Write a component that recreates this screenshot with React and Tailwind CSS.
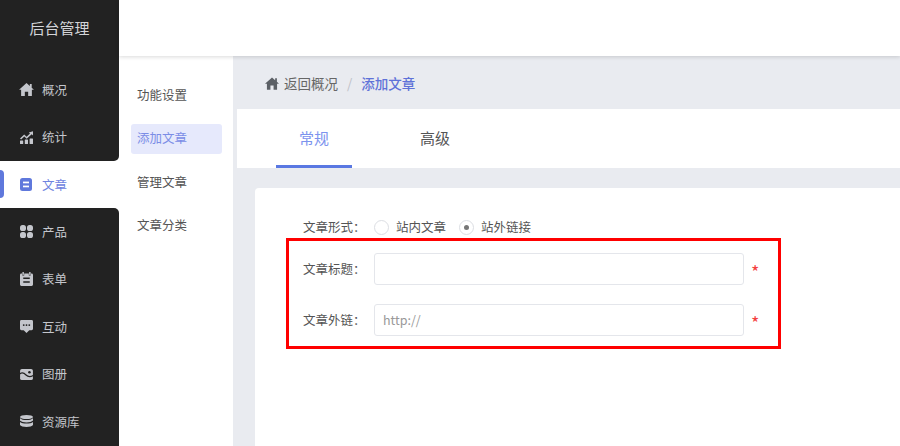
function HouseIcon({ className }) {
  return (
    <svg viewBox="0 0 16 14" className={className} fill="currentColor">
      <path d="M8 0 0 7.2h2.2V14h4V9.4h3.6V14h4V7.2H16L13.6 5V1h-2v2.2z" />
    </svg>
  )
}

function ChartIcon({ className }) {
  return (
    <svg viewBox="0 0 13 13" className={className} fill="currentColor">
      <rect x="0" y="9.6" width="3.2" height="3.4" rx="0.5" />
      <rect x="4.8" y="8.6" width="3.2" height="4.4" rx="0.5" />
      <rect x="9.6" y="7.6" width="3.4" height="5.4" rx="0.5" />
      <path d="M0 7.6 4.2 3.6l2.4 2.2L10 2.6 8.8 1.4 13 0.2v4.2l-1.3-1.2-5 4.6-2.4-2.2-3.2 3z" />
    </svg>
  )
}

function ArticleIcon({ className }) {
  return (
    <svg viewBox="0 0 12 13" className={className}>
      <rect width="12" height="13" rx="2.5" fill="currentColor" />
      <rect x="3" y="3.6" width="6" height="1.7" fill="#fff" />
      <rect x="3" y="7.6" width="6" height="1.7" fill="#fff" />
    </svg>
  )
}

function GridIcon({ className }) {
  return (
    <svg viewBox="0 0 13 13" className={className} fill="currentColor">
      <rect x="0" y="0" width="6" height="6" rx="2.6" />
      <rect x="7" y="0" width="6" height="6" rx="2.6" />
      <rect x="0" y="7" width="6" height="6" rx="2.6" />
      <rect x="7" y="7" width="6" height="6" rx="2.6" />
    </svg>
  )
}

function FormIcon({ className }) {
  return (
    <svg viewBox="0 0 14 15" className={className} fill="currentColor">
      <rect x="2.6" y="0" width="1.6" height="3" />
      <rect x="9.8" y="0" width="1.6" height="3" />
      <path d="M1.5 1.6h1v2h2v-2h5v2h2v-2h1A1.5 1.5 0 0 1 14 3v10.5a1.5 1.5 0 0 1-1.5 1.5h-11A1.5 1.5 0 0 1 0 13.5V3a1.5 1.5 0 0 1 1.5-1.4zM3.5 6v1.5h7V6zm0 4v1.5h7V10z" fillRule="evenodd" />
    </svg>
  )
}

function ChatIcon({ className }) {
  return (
    <svg viewBox="0 0 14 14" className={className}>
      <path d="M1.5 0h11A1.5 1.5 0 0 1 14 1.5v8a1.5 1.5 0 0 1-1.5 1.5H10l-3 3-3-3H1.5A1.5 1.5 0 0 1 0 9.5v-8A1.5 1.5 0 0 1 1.5 0z" fill="currentColor" />
      <circle cx="4" cy="5.5" r="1" fill="#222" />
      <circle cx="7" cy="5.5" r="1" fill="#222" />
      <circle cx="10" cy="5.5" r="1" fill="#222" />
    </svg>
  )
}

function AlbumIcon({ className }) {
  return (
    <svg viewBox="0 0 14 12" className={className}>
      <rect width="14" height="12" rx="2" fill="currentColor" />
      <path d="M-0.5 5.5C2.5 3 4.5 4.5 6.5 6.5S11 9 14.5 7" stroke="#222" strokeWidth="1.3" fill="none" />
      <circle cx="10.2" cy="3.6" r="1.4" fill="#222" />
    </svg>
  )
}

function DatabaseIcon({ className }) {
  return (
    <svg viewBox="0 0 13 12" className={className} fill="currentColor">
      <ellipse cx="6.5" cy="2" rx="6.5" ry="2" />
      <path d="M0 3.2C1.2 4.6 4 5 6.5 5S11.8 4.6 13 3.2V5.6C12 7 9 7.4 6.5 7.4S1 7 0 5.6z" />
      <path d="M0 7C1.2 8.2 4 8.6 6.5 8.6S11.8 8.2 13 7v3c-.6 1.3-3.6 2-6.5 2S.6 11.3 0 10z" />
    </svg>
  )
}

function NavItem({ icon: Icon, label, iconClass }) {
  return (
    <div className="h-[47.4px] flex items-center pl-5 text-[12.5px] text-[#c4c6cc]">
      <span className="w-[22px] flex items-center">
        <Icon className={iconClass} />
      </span>
      <span className="pt-px">{label}</span>
    </div>
  )
}

function FormRow({ label, children }) {
  return (
    <div className="flex items-center">
      <div className="w-[71px] text-[12.5px] text-[#555]">{label}</div>
      {children}
    </div>
  )
}

export default function App() {
  return (
    <div
      className="w-[900px] h-[446px] overflow-hidden flex bg-white"
      style={{ fontFamily: '"Microsoft YaHei", "Noto Sans CJK SC", "Noto Sans", sans-serif' }}
    >
      {/* main sidebar */}
      <div className="w-[119px] shrink-0 flex flex-col">
        <div className="bg-[#222222] rounded-br-[5px]">
          <div className="h-[57px] flex items-center justify-center text-[15px] text-[#d4d5d8]">后台管理</div>
          <div className="pt-[9px]">
            <NavItem icon={HouseIcon} label="概况" iconClass="w-[15px] h-[13px] -ml-px" />
            <NavItem icon={ChartIcon} label="统计" iconClass="w-[13px] h-[13px]" />
          </div>
        </div>
        <div className="relative h-[47.4px] flex items-center pl-5 text-[12.5px] text-[#6f83e0]">
          <div className="absolute left-0 top-[9px] w-[4px] h-[28px] bg-[#5f78dc] rounded-r" />
          <span className="w-[22px] flex items-center">
            <ArticleIcon className="w-[12px] h-[13px] text-[#5f78dc]" />
          </span>
          <span className="pt-px">文章</span>
        </div>
        <div className="flex-1 bg-[#222222] rounded-tr-[5px]">
          <NavItem icon={GridIcon} label="产品" iconClass="w-[13px] h-[13px]" />
          <NavItem icon={FormIcon} label="表单" iconClass="w-[13px] h-[14px]" />
          <NavItem icon={ChatIcon} label="互动" iconClass="w-[13px] h-[13px]" />
          <NavItem icon={AlbumIcon} label="图册" iconClass="w-[13px] h-[11px]" />
          <NavItem icon={DatabaseIcon} label="资源库" iconClass="w-[13px] h-[12px]" />
        </div>
      </div>

      <div className="flex-1 flex flex-col min-w-0">
        {/* top bar */}
        <div className="relative z-10 h-[56px] shrink-0 bg-white shadow-[0_1px_4px_rgba(0,0,0,0.15)]" />

        <div className="flex-1 flex min-h-0">
          {/* sub menu */}
          <div className="w-[114px] shrink-0 bg-white pt-[24px] px-[11.5px] flex flex-col gap-[13.5px] text-[12.5px] text-[#555]">
            <div className="h-[30px] flex items-center pl-[6.5px]">功能设置</div>
            <div className="h-[30px] flex items-center pl-[6.5px] bg-[#e6e9fc] text-[#7b8de6] rounded-[3px]">添加文章</div>
            <div className="h-[30px] flex items-center pl-[6.5px]">管理文章</div>
            <div className="h-[30px] flex items-center pl-[6.5px]">文章分类</div>
          </div>

          {/* content */}
          <div className="flex-1 bg-[#e9ebf0] min-w-0 flex flex-col">
            <div className="h-[53px] shrink-0 flex items-center pl-[32px] pt-[2px] text-[13.5px]">
              <HouseIcon className="w-[14px] h-[13px] text-[#5c6066] mr-[5px]" />
              <span className="text-[#666]">返回概况</span>
              <span className="mx-[9px] text-[#c0c2c8]">/</span>
              <span className="text-[#5f72d8] font-medium">添加文章</span>
            </div>

            <div className="ml-[4px] h-[59px] shrink-0 bg-white flex pl-[39px]">
              <div className="w-[76px] flex items-center justify-center text-[15px] text-[#7c93ee] border-b-[3px] border-[#5a78e2] pt-[3px]">常规</div>
              <div className="w-[44px] ml-[61px] flex items-center justify-center text-[15px] text-[#555]">高级</div>
            </div>

            <div className="relative ml-[22px] mt-[20px] flex-1 bg-white rounded-tl-[4px] pl-[48px] pt-[29px]">
              <div className="h-[20px] flex items-center">
                <div className="w-[71px] text-[12.5px] text-[#555]">文章形式：</div>
                <span className="w-[15px] h-[15px] rounded-full border border-[#dcdee3] bg-white" />
                <span className="ml-[7px] text-[12.5px] text-[#555]">站内文章</span>
                <span className="ml-[13px] w-[15px] h-[15px] rounded-full border border-[#dcdee3] bg-white flex items-center justify-center">
                  <span className="w-[5px] h-[5px] rounded-full bg-[#777]" />
                </span>
                <span className="ml-[7px] text-[12.5px] text-[#555]">站外链接</span>
              </div>

              <div className="mt-[16px] flex flex-col gap-[19px]">
                <FormRow label="文章标题：">
                  <div className="w-[370px] h-[32px] border border-[#e4e6eb] rounded-[3px] bg-white" />
                  <span className="ml-[7px] text-[18px] leading-none text-[#f44040] pt-[3px]">*</span>
                </FormRow>
                <FormRow label="文章外链：">
                  <div className="w-[370px] h-[32px] border border-[#e4e6eb] rounded-[3px] bg-white flex items-center pl-[8px] text-[12.5px] text-[#999]">http://</div>
                  <span className="ml-[7px] text-[18px] leading-none text-[#f44040] pt-[3px]">*</span>
                </FormRow>
              </div>

              {/* annotation box */}
              <div className="absolute left-[31px] top-[50px] w-[495px] h-[111px] border-[3px] border-[#ff0000]" />
            </div>
          </div>
        </div>
      </div>
    </div>
  )
}
